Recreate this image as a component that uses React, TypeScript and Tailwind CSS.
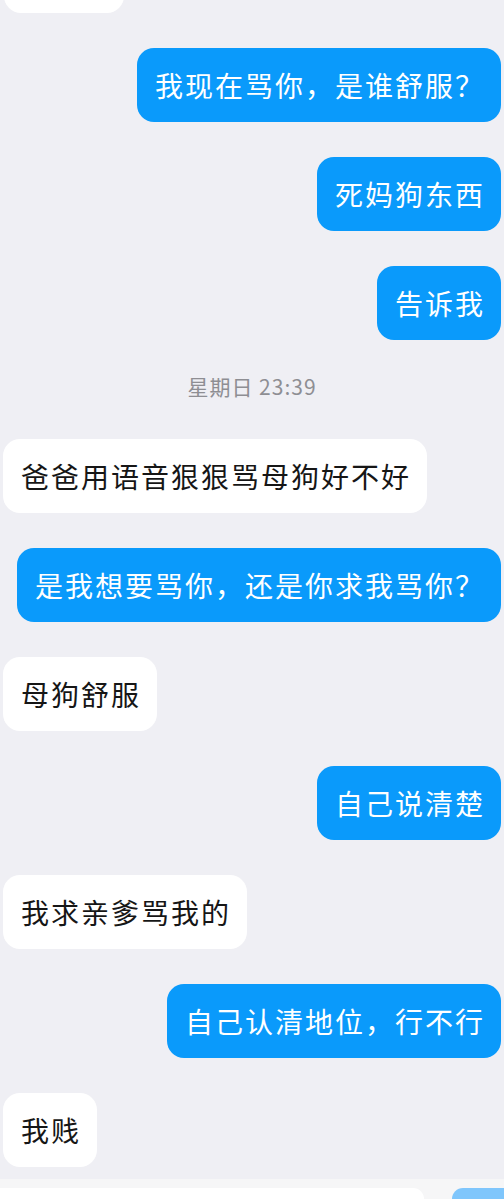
import React from 'react';

type Message = { id: number; text: string; mine: boolean };

const earlier: Message[] = [
  { id: 1, text: '我现在骂你，是谁舒服？', mine: true },
  { id: 2, text: '死妈狗东西', mine: true },
  { id: 3, text: '告诉我', mine: true },
];

const later: Message[] = [
  { id: 4, text: '爸爸用语音狠狠骂母狗好不好', mine: false },
  { id: 5, text: '是我想要骂你，还是你求我骂你？', mine: true },
  { id: 6, text: '母狗舒服', mine: false },
  { id: 7, text: '自己说清楚', mine: true },
  { id: 8, text: '我求亲爹骂我的', mine: false },
  { id: 9, text: '自己认清地位，行不行', mine: true },
  { id: 10, text: '我贱', mine: false },
];

const Bubble: React.FC<{ message: Message }> = ({ message }) => (
  <div className={`flex ${message.mine ? 'justify-end pr-[3px]' : 'justify-start pl-[3px]'}`}>
    <div
      className={`h-[74px] flex items-center rounded-[17px] pl-[18px] pr-[16px] text-[28px] tracking-[2px] whitespace-nowrap ${
        message.mine ? 'bg-[#0a9afb] text-white' : 'bg-white text-[#161616]'
      }`}
    >
      {message.text}
    </div>
  </div>
);

export default function App() {
  return (
    <div
      className="h-[1199px] w-[504px] flex flex-col overflow-hidden bg-[#efeff4]"
      style={{ fontFamily: '"Noto Sans CJK SC", "Noto Sans", sans-serif' }}
    >
      {/* Messages */}
      <div className="flex-1 overflow-hidden flex flex-col">
        <div className="pl-[4px] -mt-[61px]">
          <div className="h-[74px] w-[120px] rounded-[17px] bg-white" />
        </div>

        <div className="flex flex-col gap-[35px] mt-[35px]">
          {earlier.map(m => (
            <Bubble key={m.id} message={m} />
          ))}
        </div>

        <div className="mt-[33px] h-[26px] leading-[26px] text-center text-[21px] tracking-[1px] text-[#8e8e93]">
          星期日 23:39
        </div>

        <div className="flex flex-col gap-[35px] mt-[40px]">
          {later.map(m => (
            <Bubble key={m.id} message={m} />
          ))}
        </div>
      </div>

      {/* Input bar */}
      <div className="h-[20px] shrink-0 bg-[#f6f6f7] flex items-end gap-[28px]">
        <div className="h-[11px] w-[424px] bg-white rounded-tr-[14px]" />
        <div className="h-[11px] flex-1 bg-[#7fc6fc] rounded-tl-[14px]" />
      </div>
    </div>
  );
}
